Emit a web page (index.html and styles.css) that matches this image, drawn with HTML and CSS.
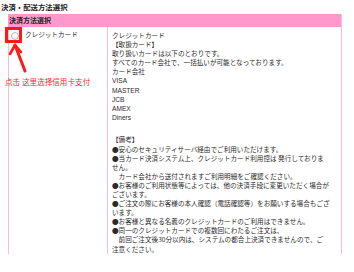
FILE: index.html
```html
<!DOCTYPE html>
<html lang="ja">
<head>
<meta charset="utf-8">
<title>決済・配送方法選択</title>
<link rel="stylesheet" href="styles.css">
</head>
<body>
<div class="page">
  <h1 class="title">決済・配送方法選択</h1>
  <div class="panel">
    <div class="panel-head">決済方法選択</div>
    <div class="row">
      <div class="cell-label">
        <label class="opt"><span class="radio"></span><span>クレジットカード</span></label>
      </div>
      <div class="cell-body">
        <p class="block">クレジットカード<br>【取扱カード】<br>取り扱いカードは以下のとおりです。<br>すべてのカード会社で、一括払いが可能となっております。<br>カード会社<br>VISA<br>MASTER<br>JCB<br>AMEX<br>Diners</p>
        <p class="block notes">【備考】<br>●安心のセキュリティサーバ経由でご利用いただけます。<br>●当カード決済システム上、クレジットカード利用控は 発行しておりま<br>せん。<br>　カード会社から送付されますご利用明細をご確認ください。<br>●お客様のご利用状態等によっては、他の決済手段に変更いただく場合が<br>ございます。<br>●ご注文の際にお客様の本人確認（電話確認等）をお願いする場合もござ<br>います。<br>●お客様と異なる名義のクレジットカードのご利用はできません。<br>●同一のクレジットカードでの複数回にわたるご注文は、<br>　前回ご注文後30分以内は、システムの都合上決済できませんので、ご<br>注意ください。</p>
      </div>
    </div>
  </div>
  <div class="annot-box"></div>
  <svg class="annot-arrow" width="30" height="34" viewBox="0 0 30 34" aria-hidden="true">
    <path d="M10 2 L20 28" stroke="#ff1a1a" stroke-width="3" fill="none" stroke-linecap="round"/>
    <path d="M5 11 L10 2 L16 9" stroke="#ff1a1a" stroke-width="2.6" fill="none" stroke-linecap="round" stroke-linejoin="round"/>
  </svg>
  <div class="annot-text">点击 这里选择信用卡支付</div>
</div>
</body>
</html>
```

FILE: styles.css
```css
html, body {
  margin: 0;
  padding: 0;
  background: #ffffff;
}

body {
  font-family: "Liberation Sans", "Noto Sans CJK JP", sans-serif;
  color: #2b2b2b;
}

.page {
  position: relative;
  padding: 3px 0 0 1px;
  width: 353px;
  height: 269px;
}

.title {
  margin: 0;
  font-size: 7.4px;
  line-height: 9px;
  font-weight: bold;
  color: #222222;
  height: 11px;
}

.panel {
  margin-left: 7px;
  width: 333px;
  border-right: 1px solid #ffb8da;
}

.panel-head {
  background: #ff99cc;
  height: 13px;
  line-height: 13px;
  font-size: 7px;
  font-weight: bold;
  padding-left: 1px;
  color: #222222;
}

.row {
  display: grid;
  grid-template-columns: 99px 1fr;
  border-left: 1px solid #ffb8da;
}

.cell-label {
  border-right: 1px solid #ffb8da;
  padding: 3px 0 0 2px;
}

.opt {
  display: flex;
  align-items: flex-start;
  font-size: 6.6px;
  line-height: 9px;
}

.radio {
  width: 6px;
  height: 6px;
  margin-top: 1.5px;
  margin-right: 6px;
  border: 0.6px solid #b9b9b9;
  border-radius: 50%;
  background: radial-gradient(circle at 50% 30%, #ffffff 0%, #f4f4f4 50%, #e2e2e2 100%);
  flex: none;
}

.cell-body {
  padding: 4px 0 0 4px;
}

.block {
  margin: 0;
  font-size: 6.6px;
  line-height: 9.1px;
  white-space: nowrap;
}

.notes {
  margin-top: 13.5px;
  font-family: "Noto Sans CJK JP", sans-serif;
}

.annot-box {
  position: absolute;
  left: 5px;
  top: 27px;
  width: 11px;
  height: 10px;
  border: 3px solid #ff1a1a;
}

.annot-arrow {
  position: absolute;
  left: 5px;
  top: 43px;
}

.annot-text {
  position: absolute;
  left: 5px;
  top: 77px;
  font-family: "Noto Sans CJK SC", sans-serif;
  font-size: 7.6px;
  line-height: 10px;
  color: #ff2a2a;
  white-space: nowrap;
}
```
